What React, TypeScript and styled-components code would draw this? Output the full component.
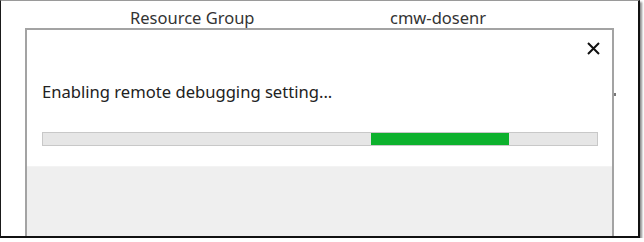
import React from "react";
import styled, { createGlobalStyle } from "styled-components";

const Global = createGlobalStyle`
  html, body { margin: 0; padding: 0; background: #ffffff; }
  body { font-family: "Noto Sans", "Open Sans", sans-serif; }
`;

const Frame = styled.div`
  position: relative;
  box-sizing: border-box;
  width: 640px;
  height: 238px;
  background: #ffffff;
  border-top: 1px solid #9a9a9a;
  border-left: 1px solid #1a1a1a;
  border-right: 2px solid #111111;
  border-bottom: 2px solid #111111;
  box-shadow: 2px 2px 2px rgba(0, 0, 0, 0.45);
  overflow: hidden;
`;

const PageRow = styled.div`
  display: grid;
  grid-template-columns: 129px 260px auto;
  padding-top: 6px;
  font-size: 16.5px;
  color: #333333;
  line-height: 22px;
`;

const Cell = styled.span<{ $col: number }>`
  grid-column: ${(p) => p.$col};
`;

const BackTick = styled.span`
  position: absolute;
  left: 613px;
  top: 92px;
  width: 2px;
  height: 3px;
  background: #777777;
`;

const Dialog = styled.div`
  position: absolute;
  left: 24px;
  top: 27px;
  width: 589px;
  height: 240px;
  box-sizing: border-box;
  border: 2px solid #a3a3a3;
  background: #ffffff;
  display: flex;
  flex-direction: column;
`;

const Header = styled.div`
  display: flex;
  justify-content: flex-end;
  height: 34px;
  padding: 10px 11px 0 0;
  box-sizing: border-box;
`;

const CloseButton = styled.button`
  border: 0;
  background: none;
  padding: 0;
  width: 16px;
  height: 16px;
  display: flex;
  align-items: center;
  justify-content: center;
  cursor: pointer;
`;

const Body = styled.div`
  padding: 17px 14px 0 15px;
  height: 102px;
  box-sizing: border-box;
`;

const Message = styled.div`
  font-size: 16.6px;
  line-height: 22px;
  color: #222222;
`;

const Track = styled.div`
  margin-top: 29px;
  height: 14px;
  box-sizing: border-box;
  background: #e6e6e6;
  border: 1px solid #c8c8c8;
  position: relative;
  display: flex;
`;

const Fill = styled.div`
  height: 100%;
  background: #0db12d;
`;

const Footer = styled.div`
  flex: 1;
  background: #efefef;
  border-top: 1px solid #f3f3f3;
`;

export default function App() {
  const start = 328;
  const width = 138;
  return (
    <>
      <Global />
      <Frame>
        <PageRow>
          <Cell $col={2}>Resource Group</Cell>
          <Cell $col={3}>cmw-dosenr</Cell>
        </PageRow>
        <BackTick />
        <Dialog>
          <Header>
            <CloseButton aria-label="Close">
              <svg width="13" height="13" viewBox="0 0 13 13">
                <path d="M1 1 L12 12 M12 1 L1 12" stroke="#111" strokeWidth="2" />
              </svg>
            </CloseButton>
          </Header>
          <Body>
            <Message>Enabling remote debugging setting...</Message>
            <Track>
              <Fill style={{ marginLeft: start, width }} />
            </Track>
          </Body>
          <Footer />
        </Dialog>
      </Frame>
    </>
  );
}
